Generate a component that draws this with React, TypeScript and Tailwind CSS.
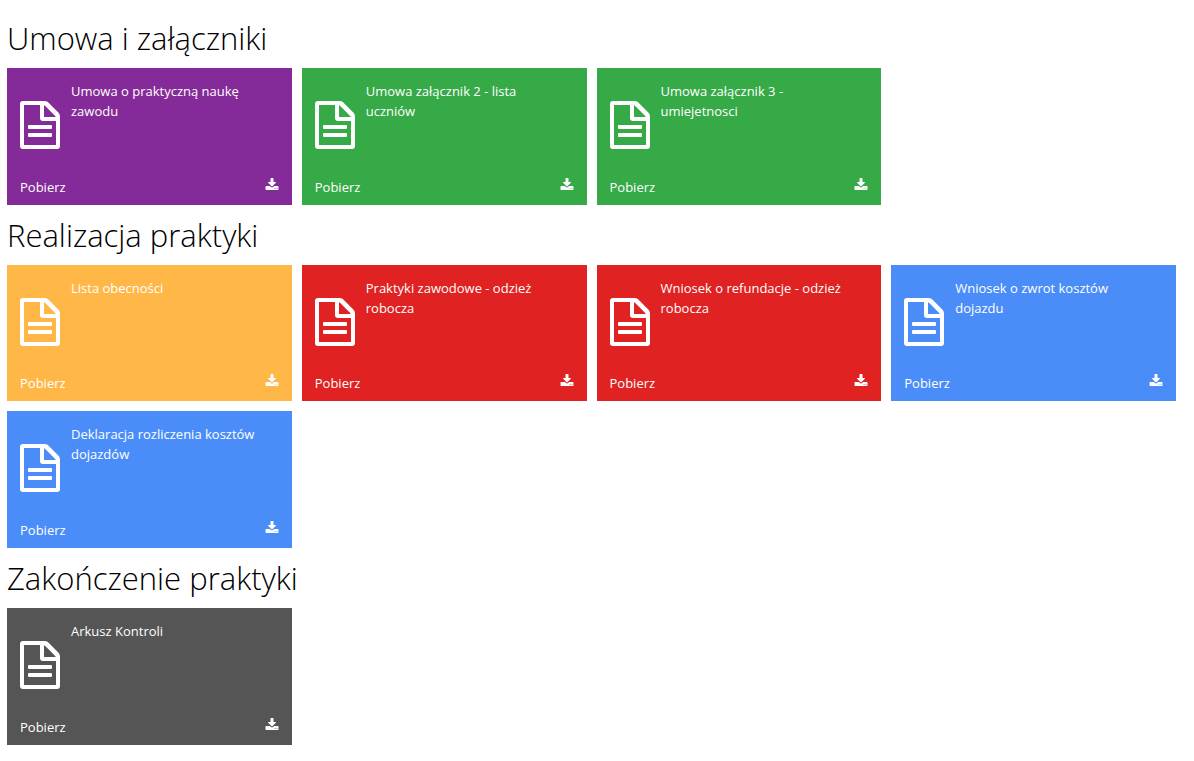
type Tile = {
  title: string;
  color: string;
};

type Section = {
  heading: string;
  tiles: Tile[];
};

const PURPLE = "bg-[#852b99]";
const GREEN = "bg-[#35aa47]";
const YELLOW = "bg-[#ffb848]";
const RED = "bg-[#e02222]";
const BLUE = "bg-[#4b8df8]";
const GREY = "bg-[#555555]";

const sections: Section[] = [
  {
    heading: "Umowa i załączniki",
    tiles: [
      { title: "Umowa o praktyczną naukę zawodu", color: PURPLE },
      { title: "Umowa załącznik 2 - lista uczniów", color: GREEN },
      { title: "Umowa załącznik 3 - umiejetnosci", color: GREEN },
    ],
  },
  {
    heading: "Realizacja praktyki",
    tiles: [
      { title: "Lista obecności", color: YELLOW },
      { title: "Praktyki zawodowe - odzież robocza", color: RED },
      { title: "Wniosek o refundacje - odzież robocza", color: RED },
      { title: "Wniosek o zwrot kosztów dojazdu", color: BLUE },
      { title: "Deklaracja rozliczenia kosztów dojazdów", color: BLUE },
    ],
  },
  {
    heading: "Zakończenie praktyki",
    tiles: [{ title: "Arkusz Kontroli", color: GREY }],
  },
];

function FileIcon() {
  return (
    <svg
      viewBox="0 0 40 48"
      className="mt-5 h-12 w-10 shrink-0"
      fill="currentColor"
      fillRule="evenodd"
      aria-hidden="true"
    >
      <path d="M3 0H25C26.3 0 27.7.8 28.6 1.7L38.3 11.4C39.2 12.3 40 14 40 15.5V45a3 3 0 0 1-3 3H3a3 3 0 0 1-3-3V3a3 3 0 0 1 3-3zM4 4v40h32V20H23a3 3 0 0 1-3-3V4zM24 4.2V16h11.7a2 2 0 0 0-.5-.9L25 4.8a2 2 0 0 0-1-.6z" />
      <path d="M9 24h22a1 1 0 0 1 1 1v2a1 1 0 0 1-1 1H9a1 1 0 0 1-1-1v-2a1 1 0 0 1 1-1zM9 32h22a1 1 0 0 1 1 1v2a1 1 0 0 1-1 1H9a1 1 0 0 1-1-1v-2a1 1 0 0 1 1-1z" />
    </svg>
  );
}

function DownloadIcon() {
  return (
    <svg
      viewBox="64 0 1664 1536"
      className="mt-px h-3 w-3.5 shrink-0"
      fill="currentColor"
      aria-hidden="true"
    >
      <path d="M1344 1344q0-26-19-45t-45-19-45 19-19 45 19 45 45 19 45-19 19-45zm256 0q0-26-19-45t-45-19-45 19-19 45 19 45 45 19 45-19 19-45zm128-224v320q0 40-28 68t-68 28h-1472q-40 0-68-28t-28-68v-320q0-40 28-68t68-28h465l135 136q58 56 136 56t136-56l136-136h464q40 0 68 28t28 68zm-325-569q17 41-14 70l-448 448q-18 19-45 19t-45-19l-448-448q-31-29-14-70 17-39 59-39h256v-448q0-26 19-45t45-19h256q26 0 45 19t19 45v448h256q42 0 59 39z" />
    </svg>
  );
}

function DownloadTile({ title, color }: Tile) {
  return (
    <a
      href="#"
      className={`flex aspect-[25/12] flex-col justify-between px-[13px] pt-[13px] pb-2 text-[13px] leading-5 text-white ${color}`}
    >
      <div className="flex items-start gap-[11px]">
        <FileIcon />
        <h3 className="pr-4">{title}</h3>
      </div>
      <div className="flex items-start justify-between">
        <span>Pobierz</span>
        <DownloadIcon />
      </div>
    </a>
  );
}

export default function App() {
  return (
    <main className="bg-white pt-2 pr-[18px] pb-4 pl-[7px] font-['Open_Sans',sans-serif] text-black">
      {sections.map((section) => (
        <section key={section.heading}>
          <h2 className="py-2.5 text-[31px] leading-10 font-light">
            {section.heading}
          </h2>
          <div className="grid grid-cols-4 gap-2.5">
            {section.tiles.map((tile) => (
              <DownloadTile key={tile.title} {...tile} />
            ))}
          </div>
        </section>
      ))}
    </main>
  );
}
